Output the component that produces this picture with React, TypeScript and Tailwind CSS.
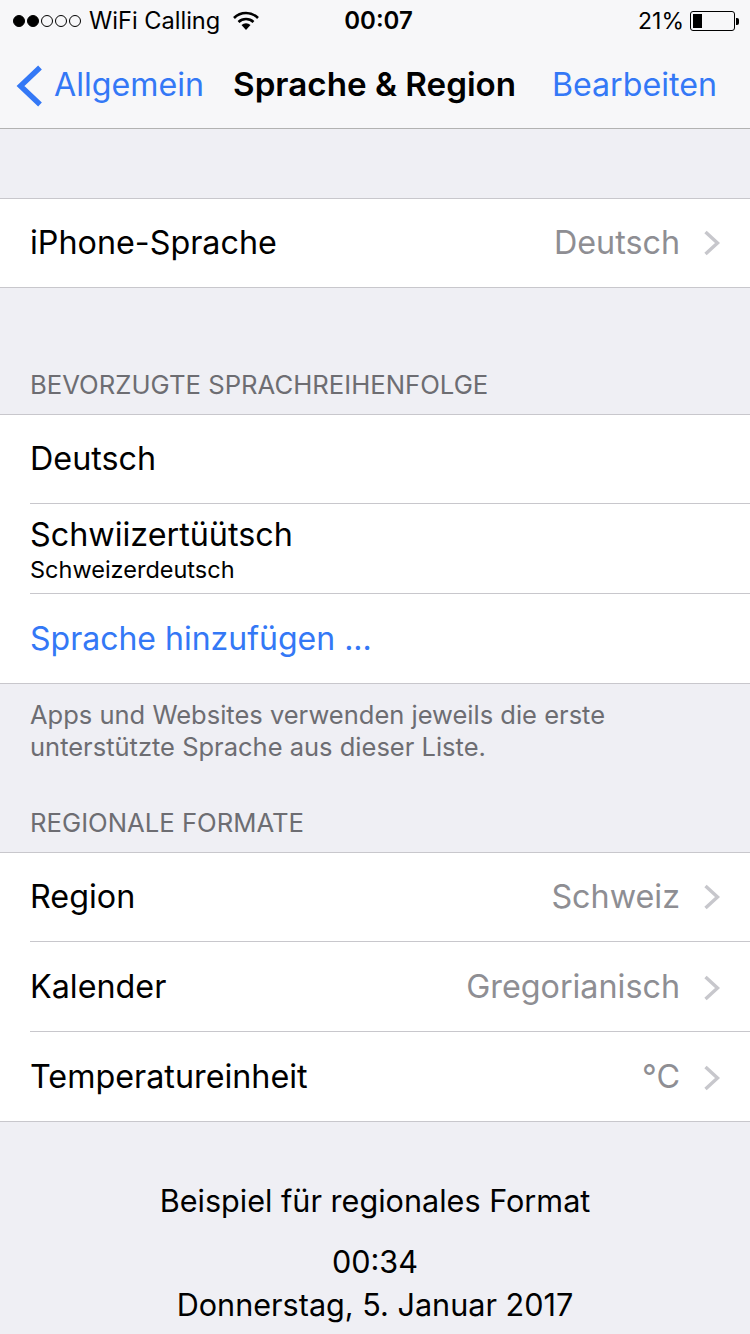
import React from "react";

const font = { fontFamily: "Inter, sans-serif" };

function Chevron() {
  return (
    <svg width="18" height="28" viewBox="0 0 18 28" className="ml-[23px] shrink-0">
      <path d="M2.5 3 L14.5 14 L2.5 25" fill="none" stroke="#c7c7cc" strokeWidth="3.4" />
    </svg>
  );
}

function Row({ label, value, h, divider, low }: { label: string; value: string; h: string; divider?: boolean; low?: boolean }) {
  return (
    <div className={`pl-[30px] ${h}`}>
      <div className={`flex h-full items-center pr-[29px] ${low ? "pt-[2px]" : ""} ${divider ? "border-b border-[#c8c7cc]" : ""}`}>
        <span className="flex-1 text-[32.3px] leading-none text-black">{label}</span>
        <span className="text-[32.3px] leading-none text-[#8e8e93]">{value}</span>
        <Chevron />
      </div>
    </div>
  );
}

export default function App() {
  return (
    <div className="flex h-[1334px] w-[750px] flex-col overflow-hidden bg-[#efeff4]" style={font}>
      <div className="h-[129px] shrink-0 border-b border-[#b2b2b2] bg-[#f7f7f9]">
        <div className="flex h-[40px] items-center pl-[13px] pr-[11px] pt-[2px] text-[24px] text-black">
          <div className="flex items-center gap-[2px]">
            {[1, 1, 0, 0, 0].map((f, i) => (
              <span key={i} className={`h-[12px] w-[12px] rounded-full border border-black ${f ? "bg-black" : ""}`} />
            ))}
          </div>
          <span className="ml-[8px] text-[23.6px]">WiFi Calling</span>
          <svg width="26" height="20" viewBox="0 0 26 20" className="ml-[13px]">
            <path d="M1 7 A17 17 0 0 1 25 7" fill="none" stroke="#000" strokeWidth="2.6" />
            <path d="M5.5 11 A11 11 0 0 1 20.5 11" fill="none" stroke="#000" strokeWidth="2.6" />
            <path d="M8.5 14 A7 7 0 0 1 17.5 14 L13 19 Z" fill="#000" />
          </svg>
          <span className="ml-[85px] font-semibold">00:07</span>
          <span className="ml-auto text-[23px]">21%</span>
          <div className="ml-[6px] flex items-center">
            <div className="flex h-[20px] w-[45px] items-stretch rounded-[3px] border border-black p-[2px]">
              <div className="w-[9px] bg-black" />
            </div>
            <div className="ml-[1px] h-[7px] w-[3px] rounded-r-[2px] bg-black" />
          </div>
        </div>
        <div className="flex h-[88px] items-center pt-[3px] pl-[16px] pr-[33px] text-[32.2px]">
          <svg width="27" height="42" viewBox="0 0 27 42" className="shrink-0">
            <path d="M24 2.5 L4.5 21 L24 39.5" fill="none" stroke="#3478f6" strokeWidth="5.4" />
          </svg>
          <span className="ml-[11px] text-[#3478f6]">Allgemein</span>
          <span className="-mt-[2px] ml-[29px] text-[33.2px] font-semibold text-black">Sprache &amp; Region</span>
          <span className="ml-auto text-[#3478f6]">Bearbeiten</span>
        </div>
      </div>

      <div className="mt-[69px] border-y border-[#c8c7cc] bg-white">
        <Row label="iPhone-Sprache" value="Deutsch" h="h-[88px]" />
      </div>

      <div className="flex h-[126px] items-end pb-[16px] pl-[30px] text-[25.7px] leading-none text-[#6d6d72]">
        BEVORZUGTE SPRACHREIHENFOLGE
      </div>

      <div className="border-y border-[#c8c7cc] bg-white">
        <div className="h-[89px] pl-[30px]">
          <div className="flex h-full items-center border-b border-[#c8c7cc] text-[32.3px] text-black">Deutsch</div>
        </div>
        <div className="h-[90px] pl-[30px]">
          <div className="flex h-full flex-col border-b border-[#c8c7cc] pt-[13px] text-black">
            <span className="text-[32.3px] leading-[36px]">Schwiizertüütsch</span>
            <span className="mt-[3px] text-[23.5px] leading-[28px]">Schweizerdeutsch</span>
          </div>
        </div>
        <div className="flex h-[89px] items-center pl-[30px] pt-[1px] text-[32px] text-[#3478f6]">Sprache hinzufügen ...</div>
      </div>

      <div className="pl-[30px] pt-[15px] text-[25.5px] leading-[32px] text-[#6d6d72]">
        <div>Apps und Websites verwenden jeweils die erste</div>
        <div>unterstützte Sprache aus dieser Liste.</div>
      </div>

      <div className="flex h-[89px] items-end pb-[16px] pl-[30px] text-[25.7px] leading-none text-[#6d6d72]">
        REGIONALE FORMATE
      </div>

      <div className="border-y border-[#c8c7cc] bg-white">
        <Row label="Region" value="Schweiz" h="h-[89px]" divider />
        <Row label="Kalender" value="Gregorianisch" h="h-[90px]" divider low />
        <Row label="Temperatureinheit" value="°C" h="h-[89px]" low />
      </div>

      <div className="flex flex-col items-center pt-[61px] text-[30.6px] text-black">
        <span className="leading-[36px]">Beispiel für regionales Format</span>
        <span className="mt-[21px] leading-[44px]">00:34</span>
        <span className="-mt-[1px] leading-[44px]">Donnerstag, 5. Januar 2017</span>
      </div>
    </div>
  );
}
